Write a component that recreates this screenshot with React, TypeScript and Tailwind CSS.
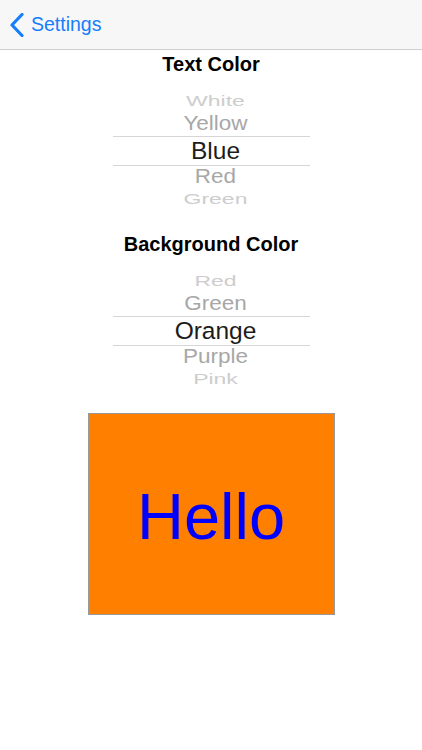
import React from 'react';

type Row = { label: string; pos: 'far' | 'near' | 'center' };

const textRows: Row[] = [
  { label: 'White', pos: 'far' },
  { label: 'Yellow', pos: 'near' },
  { label: 'Blue', pos: 'center' },
  { label: 'Red', pos: 'near' },
  { label: 'Green', pos: 'far' },
];

const bgRows: Row[] = [
  { label: 'Red', pos: 'far' },
  { label: 'Green', pos: 'near' },
  { label: 'Orange', pos: 'center' },
  { label: 'Purple', pos: 'near' },
  { label: 'Pink', pos: 'far' },
];

function Picker({ rows }: { rows: Row[] }) {
  return (
    <div className="mx-auto flex w-[197px] flex-col">
      {rows.map((r, i) => {
        if (r.pos === 'center') {
          return (
            <div
              key={i}
              className="flex h-[30px] items-center justify-center border-y border-[#d6d6d6] pl-[9px] text-[24.5px] leading-none text-[#1c1c1c]"
            >
              {r.label}
            </div>
          );
        }
        const far = r.pos === 'far';
        // outer rows are squashed like a rotating wheel
        const h = i === 3 ? 'h-[22px]' : 'h-[23px]';
        return (
          <div key={i} className={`flex items-center justify-center pl-[9px] ${h}`}>
            <span
              className={
                far
                  ? 'inline-block scale-y-[0.6] text-[23px] leading-none text-[#cdcdcd]'
                  : 'inline-block scale-y-[0.86] text-[22.5px] leading-none text-[#a7a7a7]'
              }
            >
              {r.label}
            </span>
          </div>
        );
      })}
    </div>
  );
}

export default function App() {
  return (
    <main
      className="min-h-screen w-full bg-white"
      style={{ fontFamily: '"Liberation Sans", Arial, sans-serif' }}
    >
      {/* Nav bar */}
      <header className="flex h-[50px] items-center border-b border-[#cfcfcf] bg-[#f7f7f7] pl-[10px]">
        <svg width="14" height="24" viewBox="0 0 14 24" className="mr-[7px]">
          <path
            d="M12 1.5 L2 12 L12 22.5"
            fill="none"
            stroke="#157efb"
            strokeWidth="3.2"
            strokeLinecap="round"
            strokeLinejoin="round"
          />
        </svg>
        <span className="text-[19.5px] text-[#157efb]">Settings</span>
      </header>

      {/* Text colour */}
      <h2 className="mt-[2px] h-[24px] text-center text-[20px] font-bold leading-[24px] text-black">
        Text Color
      </h2>
      <div className="mt-[14px]">
        <Picker rows={textRows} />
      </div>

      {/* Background colour */}
      <h2 className="mt-[21px] h-[24px] text-center text-[20px] font-bold leading-[24px] text-black">
        Background Color
      </h2>
      <div className="mt-[14px]">
        <Picker rows={bgRows} />
      </div>

      {/* Preview */}
      <div className="mx-auto mt-[22px] flex h-[202px] w-[247px] items-center justify-center border border-[#999999] bg-[#ff8000]">
        <span className="mt-[4px] text-[65px] leading-none text-[#0000ff]">Hello</span>
      </div>
    </main>
  );
}
